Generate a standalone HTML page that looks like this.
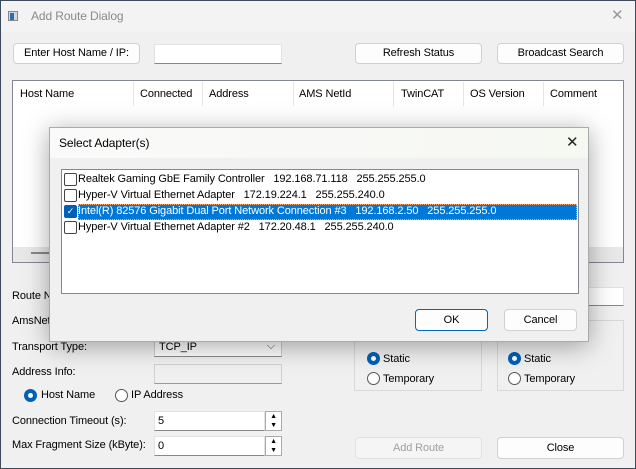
<!DOCTYPE html>
<html><head><style>
*{box-sizing:border-box;margin:0;padding:0}
body{width:636px;height:469px;overflow:hidden;background:#f0f0f0;font-family:"Liberation Sans",sans-serif;font-size:11px;letter-spacing:-0.1px;color:#000;position:relative}
.a{position:absolute;white-space:nowrap}
.btn{position:absolute;background:#fdfdfd;border:1px solid #d0d0d0;border-radius:4px;text-align:center;font-size:11px}
.inp{position:absolute;background:#fff;border:1px solid #e3e3e3;border-bottom:1px solid #888}
.rad{position:absolute;width:13px;height:13px;border-radius:50%;border:1px solid #555;background:#fff}
.rad.on{border:4px solid #0060b8}
.cb{position:absolute;width:13px;height:13px;border:1px solid #444;border-radius:2px;background:#fff}
</style></head><body>
<div class="a" style="left:0;top:0;width:636px;height:469px;border:1px solid #3c4a5a"></div>
<div class="a" style="left:1px;top:1px;width:634px;height:31px;background:#f3f3f3"></div>
<div class="a" style="left:8px;top:11px;width:10px;height:10px;background:#cfd8e0;border:1px solid #888"><div style="width:4px;height:7px;background:#2a6fb0;margin:1px"></div></div>
<div class="a" style="left:31px;top:9px;color:#8a8a8a;font-size:12px">Add Route Dialog</div>
<div class="a" style="left:611px;top:6px;color:#999;font-size:15px">✕</div>

<div class="btn" style="left:13px;top:43px;width:127px;height:21px;line-height:19px">Enter Host Name / IP:</div>
<div class="inp" style="left:154px;top:44px;width:128px;height:20px"></div>
<div class="btn" style="left:355px;top:43px;width:127px;height:21px;line-height:19px">Refresh Status</div>
<div class="btn" style="left:497px;top:43px;width:127px;height:21px;line-height:19px">Broadcast Search</div>

<div class="a" style="left:12px;top:80px;width:612px;height:183px;background:#fff;border:1px solid #828790"></div>
<div class="a" style="left:13px;top:247px;width:610px;height:15px;background:#e8e8e8"></div>
<div class="a" style="left:31px;top:252px;width:20px;height:2px;background:#888"></div>
<div class="a" style="left:20px;top:88px">Host Name</div>
<div class="a" style="left:140px;top:88px">Connected</div>
<div class="a" style="left:209px;top:88px">Address</div>
<div class="a" style="left:299px;top:88px">AMS NetId</div>
<div class="a" style="left:401px;top:88px">TwinCAT</div>
<div class="a" style="left:470px;top:88px">OS Version</div>
<div class="a" style="left:550px;top:88px">Comment</div>
<div class="a" style="left:133px;top:82px;width:1px;height:24px;background:#e5e5e5"></div>
<div class="a" style="left:202px;top:82px;width:1px;height:24px;background:#e5e5e5"></div>
<div class="a" style="left:293px;top:82px;width:1px;height:24px;background:#e5e5e5"></div>
<div class="a" style="left:393px;top:82px;width:1px;height:24px;background:#e5e5e5"></div>
<div class="a" style="left:463px;top:82px;width:1px;height:24px;background:#e5e5e5"></div>
<div class="a" style="left:543px;top:82px;width:1px;height:24px;background:#e5e5e5"></div>

<div class="a" style="left:12px;top:290px">Route Name</div>
<div class="inp" style="left:583px;top:287px;width:41px;height:19px"></div>
<div class="a" style="left:12px;top:315px">AmsNetId</div>
<div class="a" style="left:12px;top:341px">Transport Type:</div>
<div class="a" style="left:154px;top:338px;width:128px;height:19px;background:#fff;border:1px solid #ccc;border-bottom-color:#888;padding:2px 4px">TCP_IP<span style="position:absolute;right:6px;top:1px;color:#555;font-size:11px">⌵</span></div>
<div class="a" style="left:12px;top:366px">Address Info:</div>
<div class="a" style="left:154px;top:364px;width:128px;height:20px;background:#f0f0f0;border:1px solid #d0d0d0;border-bottom-color:#999"></div>
<div class="rad on" style="left:24px;top:389px"></div>
<div class="a" style="left:41px;top:389px">Host Name</div>
<div class="rad" style="left:115px;top:389px"></div>
<div class="a" style="left:131px;top:389px">IP Address</div>
<div class="a" style="left:12px;top:415px">Connection Timeout (s):</div>
<div class="inp" style="left:154px;top:411px;width:111px;height:20px;padding:3px 3px">5</div>
<div class="a" style="left:265px;top:411px;width:17px;height:20px;background:#fff;border:1px solid #aaa;font-size:7px;line-height:9px;text-align:center">▲<br>▼</div>
<div class="a" style="left:12px;top:439px">Max Fragment Size (kByte):</div>
<div class="inp" style="left:154px;top:436px;width:111px;height:20px;padding:3px 3px">0</div>
<div class="a" style="left:265px;top:436px;width:17px;height:20px;background:#fff;border:1px solid #aaa;font-size:7px;line-height:9px;text-align:center">▲<br>▼</div>

<div class="a" style="left:354px;top:320px;width:128px;height:71px;border:1px solid #d8d8d8"></div>
<div class="a" style="left:497px;top:320px;width:127px;height:71px;border:1px solid #d8d8d8"></div>
<div class="rad on" style="left:367px;top:352px"></div><div class="a" style="left:383px;top:353px">Static</div>
<div class="rad" style="left:367px;top:372px"></div><div class="a" style="left:383px;top:373px">Temporary</div>
<div class="rad on" style="left:508px;top:352px"></div><div class="a" style="left:524px;top:353px">Static</div>
<div class="rad" style="left:508px;top:372px"></div><div class="a" style="left:524px;top:373px">Temporary</div>
<div class="btn" style="left:355px;top:437px;width:127px;height:22px;line-height:20px;color:#a0a0a0;background:#f5f5f5;border-color:#e0e0e0">Add Route</div>
<div class="btn" style="left:497px;top:437px;width:127px;height:22px;line-height:20px">Close</div>

<!-- modal -->
<div class="a" style="left:49px;top:127px;width:540px;height:215px;background:#f0f0f0;border:1px solid #aaa;box-shadow:0 4px 24px rgba(0,0,0,.35)">
 <div class="a" style="left:0;top:0;width:538px;height:30px;background:linear-gradient(90deg,#fafafa,#f6f8f2)"></div>
 <div class="a" style="left:9px;top:8px;font-size:12px">Select Adapter(s)</div>
 <div class="a" style="left:516px;top:5px;font-size:15px;color:#222">✕</div>
 <div class="a" style="left:11px;top:41px;width:518px;height:125px;background:#fff;border:1px solid #828790">
  <div class="cb" style="left:2px;top:3px"></div><div class="a" style="left:16px;top:3px">Realtek Gaming GbE Family Controller&nbsp;&nbsp; 192.168.71.118&nbsp;&nbsp; 255.255.255.0</div>
  <div class="cb" style="left:2px;top:19px"></div><div class="a" style="left:16px;top:19px">Hyper-V Virtual Ethernet Adapter&nbsp;&nbsp; 172.19.224.1&nbsp;&nbsp; 255.255.240.0</div>
  <div class="a" style="left:16px;top:34px;width:499px;height:16px;background:#0078d7;border:1px dotted #ffb070"></div>
  <div class="cb" style="left:2px;top:35px;background:#0060b8;border-color:#0060b8;color:#fff;font-size:9px;line-height:11px;text-align:center">✓</div>
  <div class="a" style="left:16px;top:35px;color:#fff">Intel(R) 82576 Gigabit Dual Port Network Connection #3&nbsp;&nbsp; 192.168.2.50&nbsp;&nbsp; 255.255.255.0</div>
  <div class="cb" style="left:2px;top:51px"></div><div class="a" style="left:16px;top:51px">Hyper-V Virtual Ethernet Adapter #2&nbsp;&nbsp; 172.20.48.1&nbsp;&nbsp; 255.255.240.0</div>
 </div>
 <div class="btn" style="left:365px;top:181px;width:73px;height:22px;line-height:20px;border-color:#0067c0">OK</div>
 <div class="btn" style="left:454px;top:181px;width:73px;height:22px;line-height:20px">Cancel</div>
</div>
</body></html>
